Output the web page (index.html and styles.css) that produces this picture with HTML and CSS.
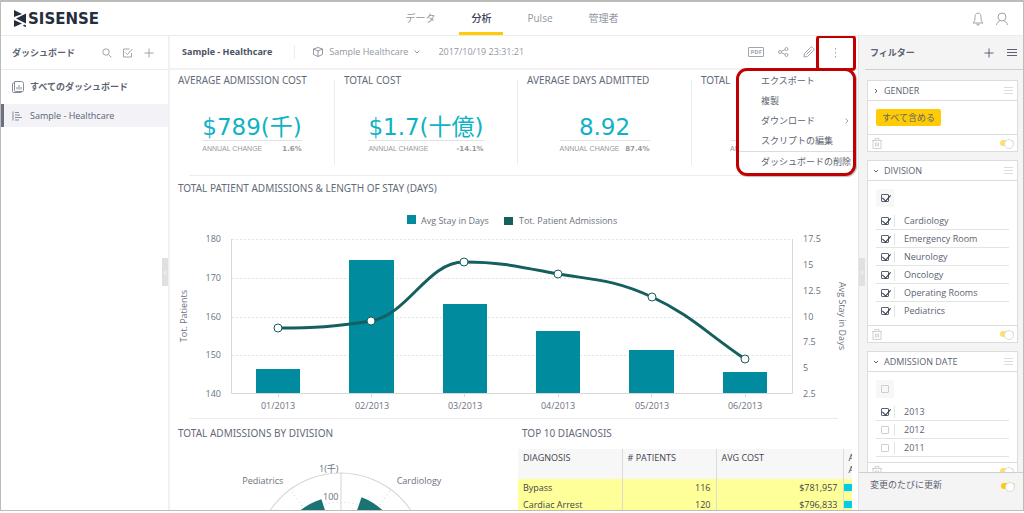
FILE: index.html
```html
<!DOCTYPE html>
<html lang="ja">
<head>
<meta charset="UTF-8">
<meta name="viewport" content="width=device-width, initial-scale=1.0">
<title>Sample - Healthcare</title>
<link rel="stylesheet" href="styles.css">
</head>
<body>

<div class="app">
  <header class="topbar">
    <a href="#" class="logo">
      <svg width="14" height="17" viewBox="0 0 14 17"><path d="M1 0L9 4L1 7zM13 3.500V13.500L3 8.500zM1 10L9 13.500L1 17zM11 14.500L13 15.500V17L10 16z"/></svg>
      <span>SISENSE</span>
    </a>
    <nav class="tabs">
      <a href="#" class="tab">データ</a>
      <a href="#" class="tab active">分析</a>
      <a href="#" class="tab">Pulse</a>
      <a href="#" class="tab">管理者</a>
    </nav>
    <div class="user-tools">
      <button class="icon-btn" aria-label="Notifications">
        <svg width="12" height="14" viewBox="0 0 12 14"><path d="M6 1C3.500 1.500 3 3 3 5.500C3 8.500 2.500 9.500 1 11H11C9.500 9.500 9 8.500 9 5.500C9 3 8.500 1.500 6 1zM5 11.500V13H7V11.500"/></svg>
      </button>
      <button class="icon-btn" aria-label="Account">
        <svg width="12" height="14" viewBox="0 0 12 14"><circle cx="6" cy="5" r="4"/><path d="M0.500 13C1 10.500 2.500 9.500 4.500 8.500M11.500 13C11 10.500 9.500 9.500 7.500 8.500"/></svg>
      </button>
    </div>
  </header>

  <div class="main">
    <aside class="sidebar">
      <div class="sidebar-head">
        <h2>ダッシュボード</h2>
        <button class="icon-btn" aria-label="Search"><svg width="10" height="10" viewBox="0 0 10 10"><circle cx="4" cy="4" r="3.200"/><path d="M6.500 6.500L9.500 9.500"/></svg></button>
        <button class="icon-btn" aria-label="Select"><svg width="10" height="10" viewBox="0 0 10 10"><path d="M6.500 1H0.500V9H8.500V5M2.500 4.500L4.500 6.500L9.500 1"/></svg></button>
        <button class="icon-btn" aria-label="Add"><svg width="10" height="10" viewBox="0 0 10 10"><path d="M5 0.500V9.500M0.500 5H9.500"/></svg></button>
      </div>
      <a href="#" class="nav-item nav-all">
        <svg width="12" height="12" viewBox="0 0 12 12"><path d="M2.500 0.500H9.500Q11.500 0.500 11.500 2.500V9.500Q11.500 10.500 10.500 10.500H3.500Q2.500 10.500 2.500 9.500zM2.500 2H1.500Q0.500 2 0.500 3V10.500Q0.500 11.500 1.500 11.500H9.500M5 8.500V6M7 8.500V4M9 8.500V6"/></svg>
        すべてのダッシュボード
      </a>
      <a href="#" class="nav-item selected">
        <svg width="12" height="10" viewBox="0 0 12 10"><path d="M1 0.500V9.500M3 1.500H7M3 4H8M3 6.500H10M3 9H7"/></svg>
        Sample - Healthcare
      </a>
      <button class="handle handle-left" aria-label="Collapse">‹</button>
    </aside>

    <main class="dashboard">
      <div class="toolbar">
        <h1>Sample - Healthcare</h1>
        <button class="source">
          <svg width="10" height="10" viewBox="0 0 10 10"><path d="M5 0.500L9.500 2V7.500L5 9.500L0.500 7.500V2zM0.500 2L5 4L9.500 2M5 4V9.500"/></svg>
          Sample Healthcare
          <svg width="6" height="4" viewBox="0 0 6 4"><path d="M0.500 0.500L3 3L5.500 0.500"/></svg>
        </button>
        <span class="date">2017/10/19 23:31:21</span>
        <div class="tools">
          <button class="icon-btn pdf">PDF</button>
          <button class="icon-btn" aria-label="Share"><svg width="11" height="10" viewBox="0 0 11 10"><circle cx="2" cy="5" r="1.500"/><circle cx="8.500" cy="2" r="1.500"/><circle cx="8.500" cy="8" r="1.500"/><path d="M3.500 4.300L7 2.700M3.500 5.700L7 7.300"/></svg></button>
          <button class="icon-btn" aria-label="Edit"><svg width="12" height="12" viewBox="0 0 12 12"><path d="M1 11L1.500 7.500L7.500 1.500Q8.500 0.500 9.500 1.500L10.500 2.500Q11.500 3.500 10.500 4.500L4.500 10.500zM3.500 8.500L8.500 3.500"/></svg></button>
          <button class="icon-btn more" aria-label="More"><svg width="3" height="11" viewBox="0 0 3 11"><path d="M1.500 1V2.500M1.500 5V6.500M1.500 9V10.500"/></svg></button>
        </div>
      </div>

      <section class="kpis">
        <div class="kpi">
          <h3>AVERAGE ADMISSION COST</h3>
          <div class="kpi-body">
            <div class="kpi-value">$789(千)</div>
            <div class="kpi-change"><span>ANNUAL CHANGE</span><b>1.6%</b></div>
          </div>
        </div>
        <div class="kpi">
          <h3>TOTAL COST</h3>
          <div class="kpi-body">
            <div class="kpi-value">$1.7(十億)</div>
            <div class="kpi-change"><span>ANNUAL CHANGE</span><b>-14.1%</b></div>
          </div>
        </div>
        <div class="kpi">
          <h3>AVERAGE DAYS ADMITTED</h3>
          <div class="kpi-body">
            <div class="kpi-value">8.92</div>
            <div class="kpi-change"><span>ANNUAL CHANGE</span><b>87.4%</b></div>
          </div>
        </div>
        <div class="kpi">
          <h3>TOTAL</h3>
          <div class="kpi-body">
            <div class="kpi-value">&nbsp;</div>
            <div class="kpi-change"><span>ANNUAL</span></div>
          </div>
        </div>
      </section>

      <section class="trend">
        <h3>TOTAL PATIENT ADMISSIONS &amp; LENGTH OF STAY (DAYS)</h3>
        <svg class="trend-chart" viewBox="0 0 688 218">
          <rect x="237" y="15" width="9" height="9" fill="#008c9e"/>
          <text x="251" y="24">Avg Stay in Days</text>
          <rect x="334" y="17" width="9" height="8" fill="#155f5f"/>
          <text x="349" y="24">Tot. Patient Admissions</text>

          <path class="grid" d="M62 39.500H622M62 78.500H622M62 117.500H622M62 155.500H622"/>
          <path class="axis" d="M61.500 39V193.500H622.500V39M108.500 194v3M201.500 194v3M294.500 194v3M388.500 194v3M481.500 194v3M575.500 194v3"/>

          <g text-anchor="end">
            <text x="51" y="42">180</text>
            <text x="51" y="81">170</text>
            <text x="51" y="120">160</text>
            <text x="51" y="158">150</text>
            <text x="51" y="197">140</text>
          </g>
          <g>
            <text x="633" y="42">17.5</text>
            <text x="633" y="68">15</text>
            <text x="633" y="94">12.5</text>
            <text x="633" y="120">10</text>
            <text x="633" y="145">7.5</text>
            <text x="633" y="171">5</text>
            <text x="633" y="197">2.5</text>
          </g>
          <g text-anchor="middle">
            <text x="108" y="209">01/2013</text>
            <text x="202" y="209">02/2013</text>
            <text x="295" y="209">03/2013</text>
            <text x="388" y="209">04/2013</text>
            <text x="482" y="209">05/2013</text>
            <text x="575" y="209">06/2013</text>
            <text transform="translate(17 116) rotate(-90)">Tot. Patients</text>
            <text transform="translate(669 116) rotate(90)">Avg Stay in Days</text>
          </g>

          <g fill="#008c9e">
            <rect x="86" y="169" width="44" height="24"/>
            <rect x="179" y="60" width="45" height="133"/>
            <rect x="273" y="104" width="44" height="89"/>
            <rect x="366" y="131" width="44" height="62"/>
            <rect x="459" y="150" width="45" height="43"/>
            <rect x="553" y="172" width="44" height="21"/>
          </g>
          <path class="line" d="M108 128C145 128 164 127 201 121C239 114 257 62 294 62C332 62 351 67 388 74C426 80 445 80 482 97C519 114 538 134 575 159"/>
          <g class="points">
            <circle cx="108" cy="128" r="4"/>
            <circle cx="201" cy="121" r="4"/>
            <circle cx="294" cy="62" r="4"/>
            <circle cx="388" cy="74" r="4"/>
            <circle cx="482" cy="97" r="4"/>
            <circle cx="575" cy="159" r="4"/>
          </g>
        </svg>
      </section>

      <section class="bottom">
        <div class="polar">
          <h3>TOTAL ADMISSIONS BY DIVISION</h3>
          <svg class="polar-chart" viewBox="0 0 343 190">
            <circle class="ring" cx="170" cy="113" r="85"/>
            <path class="ring" d="M170.500 28V113"/>
            <path class="ring dotted" d="M219 46L170 113L121 46M114 113A56 56 0 0 1 226 113"/>
            <path fill="#1b7374" d="M170 113L191 52A64 64 0 0 1 213 66zM170 113L151 54A62 62 0 0 0 129 66z"/>
            <g text-anchor="end">
              <text x="168" y="27">1(千)</text>
              <text x="168" y="55">100</text>
            </g>
            <text x="72" y="39">Pediatrics</text>
            <text x="226" y="39">Cardiology</text>
          </svg>
        </div>
        <div class="diagnosis">
          <h3>TOP 10 DIAGNOSIS</h3>
          <div class="table-wrap">
            <table>
              <thead>
                <tr><th class="c1">DIAGNOSIS</th><th class="c2"># PATIENTS</th><th class="c3">AVG COST</th><th>A<br>A</th></tr>
              </thead>
              <tbody>
                <tr><td>Bypass</td><td class="num">116</td><td class="num">$781,957</td><td class="meter"><i></i></td></tr>
                <tr><td>Cardiac Arrest</td><td class="num">120</td><td class="num">$796,833</td><td class="meter"><i></i></td></tr>
              </tbody>
            </table>
          </div>
        </div>
      </section>

      <div class="more-frame"></div>
      <div class="menu">
        <button>エクスポート</button>
        <button>複製</button>
        <button>ダウンロード <svg width="4" height="6" viewBox="0 0 4 6"><path d="M0.500 0.500L3 3L0.500 5.500"/></svg></button>
        <button>スクリプトの編集</button>
        <button class="delete">ダッシュボードの削除</button>
      </div>
    </main>

    <aside class="filters">
      <div class="filters-head">
        <h2>フィルター</h2>
        <button class="icon-btn" aria-label="Add filter"><svg width="10" height="10" viewBox="0 0 10 10"><path d="M5 0.500V9.500M0.500 5H9.500"/></svg></button>
        <button class="icon-btn" aria-label="Filter menu"><svg width="10" height="8" viewBox="0 0 10 8"><path d="M0 0.500H10M0 3.500H10M0 6.500H10"/></svg></button>
      </div>
      <div class="filter-list">
        <section class="card">
          <div class="card-head">
            <svg width="6" height="6" viewBox="0 0 6 6"><path d="M2 1L4 3L2 5"/></svg>
            <h4>GENDER</h4>
            <svg class="grip" width="9" height="7" viewBox="0 0 9 7"><path d="M0 0.500H9M0 3.500H9M0 6.500H9"/></svg>
          </div>
          <div class="card-body include"><button class="include-all">すべて含める</button></div>
          <div class="card-foot">
            <button class="icon-btn" aria-label="Delete"><svg width="10" height="11" viewBox="0 0 10 11"><path d="M0 2.500H10M3 2.500V0.500H7V2.500M1 2.500V10.500H9V2.500M3.500 4.500V8.500M5 4.500V8.500M6.500 4.500V8.500"/></svg></button>
            <input type="checkbox" class="toggle" aria-label="Gender filter on" checked>
          </div>
        </section>

        <section class="card">
          <div class="card-head">
            <svg width="6" height="6" viewBox="0 0 6 6"><path d="M1 2L3 4L5 2"/></svg>
            <h4>DIVISION</h4>
            <svg class="grip" width="9" height="7" viewBox="0 0 9 7"><path d="M0 0.500H9M0 3.500H9M0 6.500H9"/></svg>
          </div>
          <div class="card-body">
            <div class="check-all"><input type="checkbox" class="tick" aria-label="All divisions" checked></div>
            <label class="option"><input type="checkbox" class="tick" checked><span>Cardiology</span></label>
            <label class="option"><input type="checkbox" class="tick" checked><span>Emergency Room</span></label>
            <label class="option"><input type="checkbox" class="tick" checked><span>Neurology</span></label>
            <label class="option"><input type="checkbox" class="tick" checked><span>Oncology</span></label>
            <label class="option"><input type="checkbox" class="tick" checked><span>Operating Rooms</span></label>
            <label class="option last"><input type="checkbox" class="tick" checked><span>Pediatrics</span></label>
          </div>
          <div class="card-foot">
            <button class="icon-btn" aria-label="Delete"><svg width="10" height="11" viewBox="0 0 10 11"><path d="M0 2.500H10M3 2.500V0.500H7V2.500M1 2.500V10.500H9V2.500M3.500 4.500V8.500M5 4.500V8.500M6.500 4.500V8.500"/></svg></button>
            <input type="checkbox" class="toggle" aria-label="Division filter on" checked>
          </div>
        </section>

        <section class="card">
          <div class="card-head">
            <svg width="6" height="6" viewBox="0 0 6 6"><path d="M1 2L3 4L5 2"/></svg>
            <h4>ADMISSION DATE</h4>
            <svg class="grip" width="9" height="7" viewBox="0 0 9 7"><path d="M0 0.500H9M0 3.500H9M0 6.500H9"/></svg>
          </div>
          <div class="card-body">
            <div class="check-all"><input type="checkbox" class="tick" aria-label="All years"></div>
            <label class="option"><input type="checkbox" class="tick" checked><span>2013</span></label>
            <label class="option"><input type="checkbox" class="tick"><span>2012</span></label>
            <label class="option"><input type="checkbox" class="tick"><span>2011</span></label>
          </div>
          <div class="card-foot">
            <button class="icon-btn" aria-label="Delete"><svg width="10" height="11" viewBox="0 0 10 11"><path d="M0 2.500H10M3 2.500V0.500H7V2.500M1 2.500V10.500H9V2.500M3.500 4.500V8.500M5 4.500V8.500M6.500 4.500V8.500"/></svg></button>
            <input type="checkbox" class="toggle" aria-label="Date filter on" checked>
          </div>
        </section>
      </div>
      <label class="auto-update">変更のたびに更新 <input type="checkbox" class="toggle strong" checked></label>
      <button class="handle handle-right" aria-label="Collapse filters">›</button>
    </aside>
  </div>
</div>

</body>
</html>
```
FILE: styles.css
```css
* {
  box-sizing: border-box;
}
body {
  margin: 0;
  font: 9px/12px "Open Sans", "Noto Sans CJK JP", sans-serif;
  color: #5b6372;
  background: #fff;
}
h1, h2, h3, h4 {
  margin: 0;
  font-size: 9px;
  line-height: 14px;
  font-weight: 400;
}
a {
  color: inherit;
  text-decoration: none;
}
button {
  padding: 0;
  border: none;
  background: none;
  color: inherit;
  font: inherit;
  cursor: pointer;
}
svg {
  fill: none;
  stroke: currentColor;
  flex: none;
}
.icon-btn {
  display: flex;
  color: #9fa4ae;
}

.app {
  display: flex;
  flex-direction: column;
  height: calc(100vh - 2px);
  border: 1px solid #bcbcbc;
  border-top-width: 2px;
  overflow: hidden;
}

/* top bar */
.topbar {
  display: grid;
  grid-template-columns: 1fr auto 1fr;
  height: 34px;
  flex: none;
  border-bottom: 1px solid #ececee;
}
.logo {
  display: flex;
  align-items: center;
  gap: 1px;
  padding-left: 12px;
  font: bold 15px/16px "DejaVu Sans", sans-serif;
  color: #262d3d;
}
.logo svg {
  fill: #262d3d;
  stroke: none;
}
.tabs {
  display: flex;
  gap: 12px;
}
.tab {
  padding: 9px 12px 0;
  text-align: center;
  font-size: 10px;
  line-height: 15px;
  color: #9297a2;
}
.tab.active {
  color: #3a4356;
  font-weight: 500;
  border-bottom: 3px solid #ffcb05;
}
.user-tools {
  display: flex;
  justify-content: flex-end;
  align-items: center;
  gap: 12px;
  padding-right: 15px;
}

.main {
  display: flex;
  flex: 1;
  min-height: 0;
}

/* dashboards list */
.sidebar {
  position: relative;
  width: 169px;
  border-right: 2px solid #f1f1f3;
}
.sidebar-head {
  display: flex;
  align-items: center;
  gap: 11px;
  height: 34px;
  padding: 0 14px 0 11px;
  border-bottom: 1px solid #ececee;
}
.sidebar-head h2,
.filters-head h2 {
  flex: 1;
  font-weight: 700;
}
.nav-item {
  display: flex;
  align-items: center;
  gap: 6px;
  height: 23px;
  padding-left: 8px;
  border-left: 3px solid transparent;
}
.nav-all {
  height: 34px;
  font-weight: 700;
}
.selected {
  background: #f2f2f7;
  border-left-color: #6b7180;
}
.nav-item svg {
  color: #868c98;
}
.handle {
  position: absolute;
  top: 222px;
  width: 6px;
  height: 28px;
  background: #e0e0e0;
  color: #fff;
}
.handle-left {
  right: 0;
}
.handle-right {
  left: 0;
}

/* dashboard */
.dashboard {
  position: relative;
  flex: 1;
  min-width: 0;
  overflow: hidden;
}
.toolbar {
  display: flex;
  align-items: center;
  height: 34px;
  padding-left: 12px;
  border-bottom: 2px solid #f1f1f3;
  color: #9297a2;
}
.toolbar h1 {
  padding-right: 22px;
  font-weight: 700;
  color: #4a5263;
  border-right: 1px solid #ececee;
}
.source {
  display: flex;
  align-items: center;
  gap: 6px;
  margin: 0 18px;
}
.tools {
  display: flex;
  align-items: center;
  gap: 14px;
  margin-left: auto;
  padding-right: 21px;
}
.pdf {
  padding: 1px;
  border: 1px solid #9fa4ae;
  border-radius: 1px;
  font-size: 6px;
  line-height: 6px;
  font-weight: 700;
}
.tools .more {
  margin-left: 5px;
}
h3 {
  font-family: "Noto Sans", sans-serif;
  font-size: 10px;
  color: #636b79;
}

.kpis {
  display: grid;
  grid-template-columns: 164fr 183fr 174fr 167fr;
  padding-top: 10px;
}
.kpi {
  height: 85px;
  text-align: center;
  border-left: 1px solid #ececee;
}
.kpi:first-child {
  border-left: none;
}
.kpi h3 {
  margin: -7px 0 28px 9px;
  text-align: left;
}
.kpi:first-child h3 {
  margin-left: 8px;
}
.kpi-body {
  display: inline-block;
  min-width: 90px;
}
.kpi-value {
  font: 23px/25px "DejaVu Sans", "Noto Sans CJK JP", sans-serif;
  color: #0fb2c5;
  border-bottom: 1px solid #e3e3e3;
}
.kpi-change {
  display: flex;
  justify-content: space-between;
  padding-top: 3px;
  font: 7px/10px "Liberation Sans", sans-serif;
  color: #9a9a9a;
}
.kpi-change b {
  font-family: "DejaVu Sans", sans-serif;
}

.trend::before,
.bottom::before {
  content: "";
  display: block;
  margin: 0 20px 0 19px;
  border-top: 1px solid #ececee;
}
.trend {
  padding-top: 10px;
}
.trend h3 {
  margin: 5px 0 0 8px;
}
.trend-chart {
  display: block;
  width: 100%;
  margin-top: 5px;
}
.trend-chart text,
.polar-chart text {
  font-size: 9px;
  fill: #6b7280;
  stroke: none;
}
.trend-chart rect,
.polar-chart path {
  stroke: none;
}
.trend-chart .grid {
  stroke: #e3e3e3;
  stroke-dasharray: 2 2;
}
.trend-chart .axis {
  stroke: #d8d8dc;
}
.trend-chart .line {
  stroke: #155f5f;
  stroke-width: 3;
}
.points circle {
  fill: #fff;
  stroke: #155f5f;
}

.bottom {
  display: grid;
  grid-template-columns: minmax(0, 1fr) minmax(0, 1fr);
}
.bottom::before {
  grid-column: 1 / 3;
}
.bottom h3 {
  margin: 7px 0 9px 8px;
}
.polar-chart {
  display: block;
  width: 100%;
  margin-top: -4px;
}
.polar-chart .ring {
  stroke: #d4d4d4;
}
.polar-chart .dotted {
  stroke-dasharray: 1 3;
}
.table-wrap {
  margin: 0 6px 0 4px;
  overflow: hidden;
}
table {
  width: 400px;
  table-layout: fixed;
  border-collapse: collapse;
  color: #3f444e;
}
th {
  height: 30px;
  padding: 3px 5px;
  font-weight: 400;
  text-align: left;
  vertical-align: top;
  background: #f7f7f7;
}
.c1 {
  width: 104px;
}
.c2 {
  width: 94px;
}
.c3 {
  width: 127px;
}
td {
  height: 17px;
  padding: 0 5px;
  background: #ffff99;
}
th, td {
  border-right: 1px solid #dcdcd0;
}
.num {
  text-align: right;
}
.meter {
  padding: 0;
}
.meter i {
  display: block;
  height: 7px;
  background: #00cde6;
}

/* "more" menu and its highlight */
.more-frame {
  position: absolute;
  top: -1px;
  right: 2px;
  width: 40px;
  height: 36px;
  border: 3px solid #c00000;
  border-radius: 4px;
}
.menu {
  position: absolute;
  top: 32px;
  right: 2px;
  width: 120px;
  padding-bottom: 1px;
  background: #fff;
  border: 3px solid #c00000;
  border-radius: 11px;
  box-shadow: 1px 1px 1px #bbb;
}
.menu button {
  display: flex;
  align-items: center;
  justify-content: space-between;
  width: 100%;
  height: 20px;
  padding: 0 4px 0 22px;
  white-space: nowrap;
}
.menu svg {
  color: #9fa4ae;
}
.menu .delete {
  height: 21px;
  padding-right: 0;
  border-top: 1px solid #dcdcdc;
}

/* filters */
.filters {
  position: relative;
  display: flex;
  flex-direction: column;
  width: 165px;
  background: #f4f4f4;
  border-left: 1px solid #e6e6e6;
}
.filters-head {
  display: flex;
  align-items: center;
  gap: 13px;
  flex: none;
  height: 34px;
  margin-left: 6px;
  padding: 0 6px 0 5px;
  border-bottom: 1px solid #cfcfcf;
}
.filters-head .icon-btn {
  color: #5b6372;
}
.filter-list {
  display: flex;
  flex-direction: column;
  gap: 8px;
  flex: 1;
  min-height: 0;
  padding: 10px 5px 0 8px;
  overflow: hidden;
}
.card {
  flex: none;
  background: #fff;
  border: 1px solid #dcdcdc;
}
.card-head {
  display: flex;
  align-items: center;
  gap: 5px;
  height: 20px;
  padding: 0 4px 0 5px;
  border-bottom: 1px solid #dcdcdc;
}
.card-head h4 {
  flex: 1;
}
.grip {
  color: #dcdcdc;
}
.card-body {
  padding: 8px 8px 5px;
}
.include {
  padding: 8px;
}
.include-all {
  display: block;
  height: 17px;
  padding: 0 6px;
  border-radius: 2px;
  background: #ffcb05;
}
.card-foot {
  display: flex;
  align-items: center;
  justify-content: space-between;
  height: 17px;
  padding: 0 3px 0 4px;
  border-top: 1px solid #dcdcdc;
}
.card-foot .icon-btn {
  color: #d0d0d0;
}
.check-all {
  display: flex;
  width: 18px;
  height: 18px;
  margin-bottom: 5px;
  padding: 5px;
  background: #f7f7f7;
}
.option {
  display: flex;
  align-items: center;
  height: 18px;
  padding-left: 5px;
  border-bottom: 1px solid #e3e3e3;
}
.option.last {
  border-bottom: none;
}
.option span {
  margin-left: 5px;
  padding-left: 9px;
  border-left: 1px solid #e3e3e3;
}
.tick {
  position: relative;
  appearance: none;
  width: 8px;
  height: 8px;
  margin: 0;
  border: 1px solid #cfcfcf;
  border-radius: 1px;
}
.tick:checked {
  border-color: #5b6372;
}
.tick:checked::after {
  content: "";
  position: absolute;
  left: 2px;
  top: -2px;
  width: 4px;
  height: 7px;
  border: solid #2f3747;
  border-width: 0 1px 1px 0;
  transform: rotate(42deg);
}
.toggle {
  position: relative;
  appearance: none;
  width: 14px;
  height: 6px;
  margin: 0;
  border-radius: 3px;
  background: #ffdf6b;
}
.toggle::after {
  content: "";
  position: absolute;
  right: 0;
  top: -1px;
  width: 8px;
  height: 8px;
  border: 1px solid #dcdcdc;
  border-radius: 50%;
  background: #fff;
}
.toggle.strong {
  background: #ffcb05;
}
.auto-update {
  display: flex;
  align-items: flex-start;
  justify-content: space-between;
  flex: none;
  height: 38px;
  padding: 6px 8px 0 11px;
  border-top: 1px solid #cfcfcf;
}
.auto-update .toggle {
  margin-top: 4px;
}
```
